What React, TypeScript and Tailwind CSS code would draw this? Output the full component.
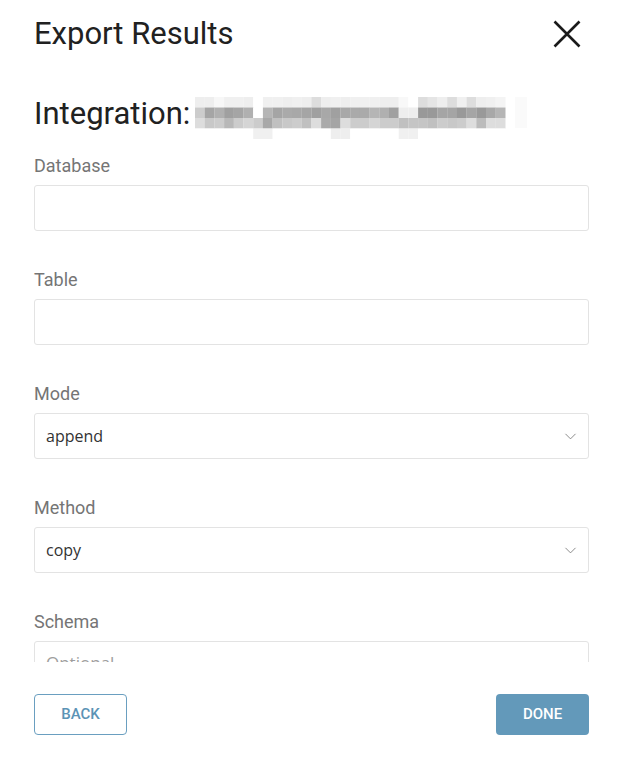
import { ChevronDown } from 'lucide-react';

// redacted integration name, drawn as the pixel mosaic from the screenshot
const mosaic: string[][] = [
  ['eee', 'eee', 'f7f7f7', 'f0f0f0', 'f0f0f0', 'eee', 'fff', 'f0f0f0', 'f0f0f0', 'eee', 'f0f0f0', 'eee', 'ddd', 'eee', 'f0f0f0', 'eee', 'f0f0f0', 'f0f0f0', 'f0f0f0', 'eee', 'eee', 'f8f8f8', 'fff', 'ddd', 'e5e5e5', 'eee', 'ddd', 'f0f0f0', 'ddd', 'eee', 'f0f0f0', 'f4f4f4'],
  ['ccc', 'a5a5a5', 'b0b0b0', 'a0a0a0', 'a5a5a5', 'b0b0b0', 'fff', 'b5b5b5', 'a5a5a5', 'aaa', 'a8a8a8', 'a5a5a5', 'a0a0a0', 'a8a8a8', 'a0a0a0', 'a8a8a8', 'aaa', 'aaa', 'b5b5b5', 'b0b0b0', 'a0a0a0', 'eee', 'eee', '999', '999', 'a5a5a5', 'a5a5a5', '999', 'a5a5a5', '999', 'a8a8a8', 'b5b5b5'],
  ['ddd', 'c8c8c8', 'ccc', 'b8b8b8', 'ccc', 'd5d5d5', 'ccc', 'a8a8a8', 'c0c0c0', 'c8c8c8', 'ccc', 'c0c0c0', 'ddd', 'aaa', 'a5a5a5', 'ddd', 'ccc', 'ccc', 'd5d5d5', 'ccc', 'ccc', 'c0c0c0', 'c5c5c5', 'c5c5c5', 'c0c0c0', 'ccc', 'c8c8c8', 'ccc', 'ddd', 'bbb', 'ddd', 'ddd'],
  ['fff', 'fff', 'fff', 'fff', 'fff', 'fff', 'f0f0f0', 'f0f0f0', 'fff', 'fff', 'fff', 'fff', 'fff', 'fff', 'eee', 'eee', 'fff', 'fff', 'fff', 'fff', 'fff', 'f0f0f0', 'f0f0f0', 'fff', 'fff', 'fff', 'fff', 'fff', 'fff', 'fff', 'fff', 'fff'],
];

function Redacted() {
  return (
    <svg width="345" height="42" viewBox="0 0 345 42" className="ml-[5px] mt-[1px] shrink-0">
      {mosaic.map((row, r) =>
        row.map((c, i) => (
          <rect key={`${r}-${i}`} x={i * 9.7} y={r * 10.5} width="9.8" height="10.6" fill={`#${c}`} />
        ))
      )}
      <rect x="320" y="0" width="12" height="31" fill="#fafafa" />
    </svg>
  );
}

function Field({ label, value, placeholder, select }: { label: string; value?: string; placeholder?: string; select?: boolean }) {
  return (
    <div className="flex flex-col mb-[37px]">
      <label className="text-[18px] leading-[24px] text-[#757575]">{label}</label>
      <div className="mt-[7px] h-[46px] flex items-center border border-[#e3e3e3] rounded-[3px] pl-[11px] pr-[8px] font-['Open_Sans'] text-[16px]">
        {value && <span className="text-[#333333]">{value}</span>}
        {placeholder && <span className="text-[#9e9e9e] text-[17px] -mt-[3px]">{placeholder}</span>}
        {select && <ChevronDown size={19} strokeWidth={1.1} className="ml-auto text-[#7a7a7a]" />}
      </div>
    </div>
  );
}

export default function App() {
  return (
    <div className="w-[620px] h-[758px] bg-white flex flex-col font-['Roboto'] overflow-hidden">
      <div className="pt-4 px-[34px] flex items-center justify-between">
        <h2 className="text-[31px] leading-[36px] text-[#212121]">Export Results</h2>
        <svg width="28" height="28" viewBox="0 0 28 28" className="mr-[5px]">
          <path d="M1.5 1.5 L26.5 26.5 M26.5 1.5 L1.5 26.5" stroke="#1a1a1a" strokeWidth="2.6" fill="none" />
        </svg>
      </div>

      <div className="h-[610px] overflow-hidden px-[31px] pl-[34px]">
        <div className="pt-[44px] flex items-start">
          <h3 className="text-[31px] leading-[36px] text-[#212121]">Integration:</h3>
          <Redacted />
        </div>
        <div className="pt-[15px]">
          <Field label="Database" />
          <Field label="Table" />
          <Field label="Mode" value="append" select />
          <Field label="Method" value="copy" select />
          <Field label="Schema" placeholder="Optional" />
        </div>
      </div>

      <div className="px-[31px] pl-[34px] pt-[32px] flex justify-between">
        <button className="w-[93px] h-[41px] rounded-[4px] border border-[#6a9fc0] text-[#5b93b5] text-[15px] font-medium">
          BACK
        </button>
        <button className="w-[93px] h-[41px] rounded-[4px] bg-[#6399ba] text-white text-[15px] font-medium">
          DONE
        </button>
      </div>
    </div>
  );
}
